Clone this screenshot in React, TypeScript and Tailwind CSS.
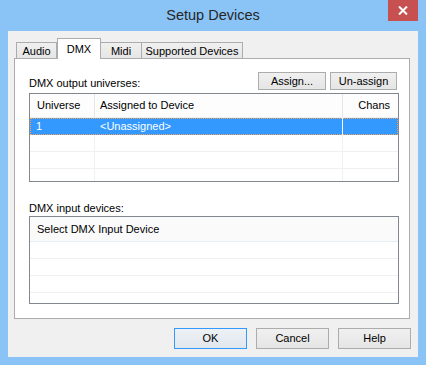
import React from 'react';

const btn =
  'flex items-center justify-center border border-[#acacac] bg-gradient-to-b from-[#f0f0f0] to-[#e5e5e5] text-black';

const Tab = ({ label, w, active, first }: { label: string; w: string; active?: boolean; first?: boolean }) => (
  <div
    className={
      active
        ? `${w} h-[21px] bg-white border border-b-0 border-[#acacac] flex items-start justify-center pt-[2px] relative z-10`
        : `${w} h-[17px] bg-gradient-to-b from-[#f0f0f0] to-[#e5e5e5] border border-b-0 border-[#acacac] ${first ? '' : 'border-l-0'} flex items-center justify-center`
    }
  >
    {label}
  </div>
);

const EmptyRow = ({ cols }: { cols: boolean }) => (
  <div className="h-[17px] flex border-b border-[#f0f0f0] shrink-0">
    {cols ? (
      <>
        <div className="w-[65px] border-r border-[#f0f0f0]" />
        <div className="flex-1 border-r border-[#f0f0f0]" />
        <div className="w-[55px]" />
      </>
    ) : null}
  </div>
);

export default function App() {
  return (
    <div className="w-[426px] h-[365px] bg-[#8ac4f6] flex flex-col font-['Segoe_UI','Liberation_Sans',sans-serif] text-[11px] text-black">
      {/* title bar */}
      <div className="h-[31px] flex items-start shrink-0">
        <div className="w-[38px]" />
        <div className="flex-1 text-center text-[14.5px] leading-[31px] text-[#262626]">Setup Devices</div>
        <div className="w-[30px] h-[21px] mr-[8px] bg-[#c75050] flex items-center justify-center">
          <svg width="10" height="9" viewBox="0 0 10 9">
            <path d="M1 0.5 L9 8.5 M9 0.5 L1 8.5" stroke="white" strokeWidth="2" />
          </svg>
        </div>
      </div>

      {/* client area */}
      <div className="mx-[8px] mb-[8px] flex-1 bg-[#f0f0f0] flex flex-col pl-[6px] pr-[8px] pt-[7px]">
        <div className="flex items-end h-[21px] pl-[2px] -mb-[1px] shrink-0">
          <Tab label="Audio" w="w-[41px]" first />
          <Tab label="DMX" w="w-[44px]" active />
          <Tab label="Midi" w="w-[41px]" />
          <Tab label="Supported Devices" w="w-[101px]" />
        </div>

        <div className="flex-1 bg-white border border-[#acacac] flex flex-col pl-[14px] pr-[10px]">
          <div className="mt-[13px] h-[18px] flex items-start justify-between">
            <div className="mt-[3px] leading-[16px]">DMX output universes:</div>
            <div className="flex gap-[4px] mr-[2px]">
              <div className={`${btn} w-[68px] h-[18px]`}>Assign...</div>
              <div className={`${btn} w-[67px] h-[18px]`}>Un-assign</div>
            </div>
          </div>

          {/* output universes table */}
          <div className="mt-[3px] h-[89px] border border-[#828790] flex flex-col overflow-hidden">
            <div className="h-[24px] flex shrink-0 bg-[#fdfdfd] border-b border-[#f0f0f0]">
              <div className="w-[65px] pl-[7px] flex items-center border-r border-[#e5e5e5]">Universe</div>
              <div className="flex-1 pl-[5px] flex items-center border-r border-[#e5e5e5]">Assigned to Device</div>
              <div className="w-[55px] pr-[8px] flex items-center justify-end">Chans</div>
            </div>
            <div className="h-[17px] flex shrink-0 bg-[#3399ff] text-white outline-1 outline-dotted outline-[#f0a060] -outline-offset-1">
              <div className="w-[65px] pl-[6px] flex items-center">1</div>
              <div className="flex-1 pl-[5px] flex items-center border-r border-white">&lt;Unassigned&gt;</div>
              <div className="w-[55px]" />
            </div>
            <EmptyRow cols />
            <EmptyRow cols />
            <EmptyRow cols />
          </div>

          <div className="mt-[18px] leading-[16px]">DMX input devices:</div>

          {/* input devices table */}
          <div className="h-[88px] border border-[#828790] flex flex-col overflow-hidden">
            <div className="h-[25px] shrink-0 pl-[7px] flex items-center bg-[#fafafa] border-b border-[#e6edf5]">
              Select DMX Input Device
            </div>
            <EmptyRow cols={false} />
            <EmptyRow cols={false} />
            <EmptyRow cols={false} />
            <EmptyRow cols={false} />
          </div>
        </div>

        <div className="h-[38px] pt-[9px] pb-[8px] flex justify-end gap-[9px] -mr-[1px] shrink-0">
          <div className="w-[73px] h-[21px] flex items-center justify-center border border-[#3399ff] bg-gradient-to-b from-[#edf1f5] to-[#e1e7ee]">
            OK
          </div>
          <div className={`${btn} w-[73px] h-[21px]`}>Cancel</div>
          <div className={`${btn} w-[73px] h-[21px]`}>Help</div>
        </div>
      </div>
    </div>
  );
}
